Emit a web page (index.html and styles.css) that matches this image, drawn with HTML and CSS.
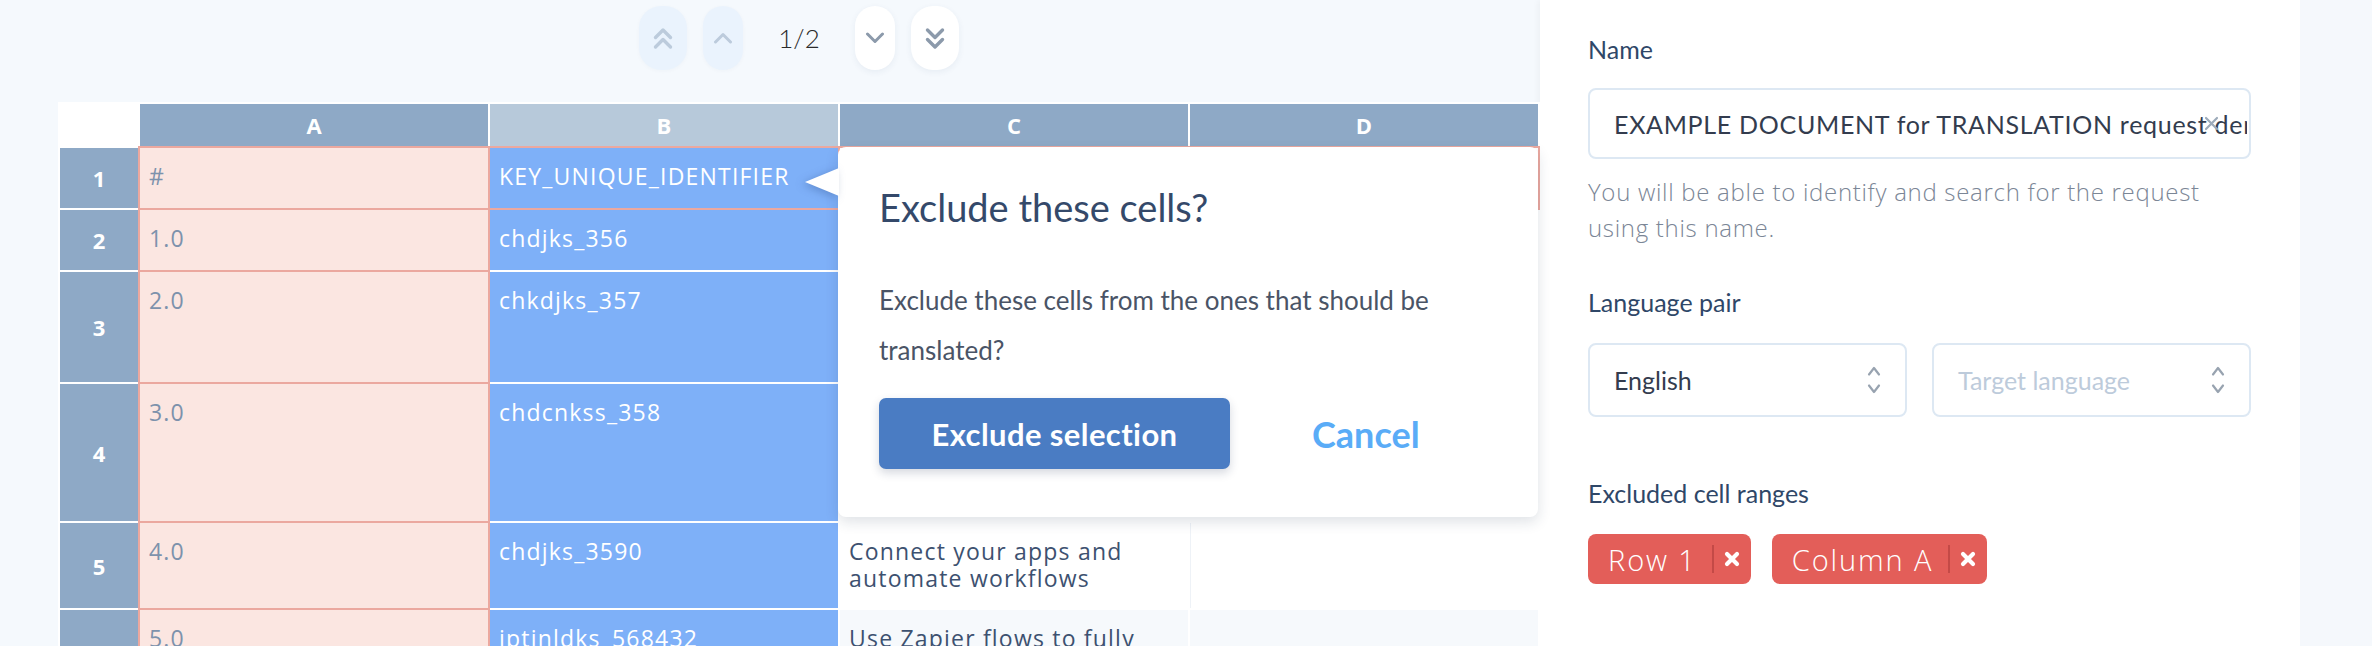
FILE: index.html
```html
<!DOCTYPE html>
<html lang="en">
<head>
<meta charset="utf-8">
<title>Translation request</title>
<link rel="stylesheet" href="styles.css">
</head>
<body>
<div class="app">
  <main class="workspace">
    <nav class="pager">
      <button class="pg pg-wide pg-off" aria-label="First">
        <svg width="20" height="23" viewBox="0 0 20 23"><path d="M2.5 10.5 L10 3 L17.5 10.5 M2.5 20 L10 12.5 L17.5 20" fill="none" stroke="currentColor" stroke-width="3.4" stroke-linecap="round" stroke-linejoin="round"/></svg>
      </button>
      <button class="pg pg-off" aria-label="Previous">
        <svg width="20" height="12" viewBox="0 0 20 12"><path d="M2.5 10 L10 2.5 L17.5 10" fill="none" stroke="currentColor" stroke-width="3" stroke-linecap="round" stroke-linejoin="round"/></svg>
      </button>
      <span class="pg-count">1/2</span>
      <button class="pg" aria-label="Next">
        <svg width="20" height="12" viewBox="0 0 20 12"><path d="M2.5 2 L10 9.5 L17.5 2" fill="none" stroke="currentColor" stroke-width="3" stroke-linecap="round" stroke-linejoin="round"/></svg>
      </button>
      <button class="pg pg-wide" aria-label="Last">
        <svg width="20" height="23" viewBox="0 0 20 23"><path d="M2.5 3 L10 10.5 L17.5 3 M2.5 12.5 L10 20 L17.5 12.5" fill="none" stroke="currentColor" stroke-width="3.4" stroke-linecap="round" stroke-linejoin="round"/></svg>
      </button>
    </nav>

    <section class="sheet-wrap">
      <div class="sheet">
        <div class="corner"></div>
        <div class="col-h">A</div>
        <div class="col-h col-h-sel">B</div>
        <div class="col-h">C</div>
        <div class="col-h">D</div>

        <div class="row-h">1</div>
        <div class="cell cell-a">#</div>
        <div class="cell cell-b cell-ex">KEY_UNIQUE_IDENTIFIER</div>
        <div class="cell cell-ex"></div>
        <div class="cell cell-ex"></div>

        <div class="row-h">2</div>
        <div class="cell cell-a">1.0</div>
        <div class="cell cell-b">chdjks_356</div>
        <div class="cell"></div>
        <div class="cell"></div>

        <div class="row-h">3</div>
        <div class="cell cell-a">2.0</div>
        <div class="cell cell-b">chkdjks_357</div>
        <div class="cell"></div>
        <div class="cell"></div>

        <div class="row-h">4</div>
        <div class="cell cell-a">3.0</div>
        <div class="cell cell-b">chdcnkss_358</div>
        <div class="cell"></div>
        <div class="cell"></div>

        <div class="row-h">5</div>
        <div class="cell cell-a">4.0</div>
        <div class="cell cell-b">chdjks_3590</div>
        <div class="cell">Connect your apps and automate workflows</div>
        <div class="cell cell-d"></div>

        <div class="row-h">6</div>
        <div class="cell cell-a">5.0</div>
        <div class="cell cell-b">iptinldks_568432</div>
        <div class="cell cell-alt">Use Zapier flows to fully automate your workflow</div>
        <div class="cell cell-alt"></div>
      </div>

      <div class="pop-arrow"></div>
      <div class="popover" role="dialog">
        <h2 class="pop-title">Exclude these cells?</h2>
        <p class="pop-text">Exclude these cells from the ones that should be translated?</p>
        <div class="pop-actions">
          <button class="btn-primary">Exclude selection</button>
          <button class="btn-link">Cancel</button>
        </div>
      </div>
    </section>
  </main>

  <aside class="panel">
    <p class="field-label">Name</p>
    <div class="text-input">
      <span class="text-value">EXAMPLE DOCUMENT for TRANSLATION request demo file</span>
      <svg class="clear" width="15" height="15" viewBox="0 0 15 15"><path d="M2 2 L13 13 M13 2 L2 13" stroke="currentColor" stroke-width="2.2" stroke-linecap="round"/></svg>
    </div>
    <p class="hint">You will be able to identify and search for the request using this name.</p>

    <p class="field-label label-gap">Language pair</p>
    <div class="select-row">
      <div class="select">
        <span>English</span>
        <svg width="14" height="32" viewBox="0 0 14 32"><path d="M2 10.5 L7 4 L12 10.5 M2 21.5 L7 28 L12 21.5" fill="none" stroke="currentColor" stroke-width="2.2" stroke-linecap="round" stroke-linejoin="round"/></svg>
      </div>
      <div class="select">
        <span class="placeholder">Target language</span>
        <svg width="14" height="32" viewBox="0 0 14 32"><path d="M2 10.5 L7 4 L12 10.5 M2 21.5 L7 28 L12 21.5" fill="none" stroke="currentColor" stroke-width="2.2" stroke-linecap="round" stroke-linejoin="round"/></svg>
      </div>
    </div>

    <p class="field-label label-gap-lg">Excluded cell ranges</p>
    <div class="chips">
      <span class="chip">Row 1<span class="chip-sep"></span><svg width="18" height="18" viewBox="0 0 18 18"><path d="M4 4 L14 14 M14 4 L4 14" stroke="#fff" stroke-width="4.2" stroke-linecap="round"/></svg></span>
      <span class="chip">Column A<span class="chip-sep"></span><svg width="18" height="18" viewBox="0 0 18 18"><path d="M4 4 L14 14 M14 4 L4 14" stroke="#fff" stroke-width="4.2" stroke-linecap="round"/></svg></span>
    </div>
  </aside>
  <div class="edge"></div>
</div>
</body>
</html>
```

FILE: styles.css
```css
html, body {
  margin: 0;
  height: 646px;
  overflow: hidden;
}
body {
  background: #f5f9fd;
  font-family: Lato, "Liberation Sans", sans-serif;
}
.app {
  display: flex;
  height: 646px;
}
.workspace {
  width: 1540px;
  flex: none;
  padding-left: 58px;
  box-sizing: border-box;
}

/* pager */
.pager {
  height: 102px;
  box-sizing: border-box;
  padding-top: 6px;
  display: flex;
  justify-content: center;
  align-items: flex-start;
  gap: 16px;
}
.pg {
  width: 40px;
  height: 64px;
  padding: 0;
  border: 0;
  border-radius: 22px;
  background: #fff;
  color: #8c9aab;
  box-shadow: 0 2px 6px rgba(40, 70, 110, 0.07);
  display: flex;
  align-items: center;
  justify-content: center;
}
.pg-wide { width: 48px; }
.pg-off {
  background: #eaf3fd;
  color: #bccbdc;
  box-shadow: 0 1px 4px rgba(40, 70, 110, 0.03);
}
.pg-count {
  width: 80px;
  text-align: center;
  line-height: 64px;
  font-size: 26px;
  font-weight: 300;
  color: #2a2a2a;
}

/* sheet */
.sheet-wrap { position: relative; }
.sheet {
  display: grid;
  grid-template-columns: 78px repeat(4, 348px);
  grid-template-rows: 42px 60px 60px 110px 137px 85px 150px;
  gap: 2px;
  padding: 2px;
  background: #fff;
  width: max-content;
}
.corner { background: #fff; }
.col-h, .row-h {
  background: #8ea9c6;
  color: #fff;
  font-family: "Open Sans", sans-serif;
  font-weight: 700;
  font-size: 22px;
  display: flex;
  align-items: center;
  justify-content: center;
}
.col-h-sel { background: #b7c9da; }
.cell {
  background: #fff;
  color: #3d5170;
  font-family: "Open Sans", sans-serif;
  font-size: 23px;
  letter-spacing: 1.2px;
  line-height: 27px;
  padding: 15px 9px 0;
  box-sizing: border-box;
  overflow: hidden;
}
.cell-a {
  background: #fbe6e1;
  color: #7d92ac;
  box-shadow: 0 0 0 2px #eba89f;
}
.cell-b {
  background: #7eb0f8;
  color: #fff;
  white-space: nowrap;
}
.cell-ex { box-shadow: 0 0 0 2px #eba89f; }
.cell-d { border-left: 1px solid #eef2f7; }
.cell-alt { background: #f6f9fc; }

/* popover */
.popover {
  position: absolute;
  left: 780px;
  top: 45px;
  width: 700px;
  height: 370px;
  box-sizing: border-box;
  padding: 38px 41px;
  background: #fff;
  border-radius: 8px;
  box-shadow: 0 5px 14px rgba(30, 50, 80, 0.14);
  z-index: 2;
}
.pop-arrow {
  position: absolute;
  left: 747px;
  top: 66px;
  width: 0;
  height: 0;
  border-style: solid;
  border-width: 14px 34px 14px 0;
  border-color: transparent #fff transparent transparent;
  filter: drop-shadow(-3px 2px 4px rgba(30, 60, 120, 0.3));
  z-index: 3;
}
.pop-title {
  margin: 0;
  font-size: 38px;
  line-height: 44px;
  font-weight: 400;
  color: #34496a;
}
.pop-text {
  margin: 46px 0 0;
  font-size: 26px;
  line-height: 50px;
  color: #4a5466;
}
.pop-actions {
  display: flex;
  align-items: center;
  margin-top: 23px;
}
.btn-primary {
  width: 351px;
  height: 71px;
  border: 0;
  border-radius: 7px;
  background: #4a7cc3;
  color: #fff;
  font-family: Lato, sans-serif;
  font-weight: 700;
  font-size: 31px;
  letter-spacing: 0.4px;
  box-shadow: 0 4px 10px rgba(20, 40, 80, 0.18);
}
.btn-link {
  margin-left: 82px;
  padding: 0;
  border: 0;
  background: none;
  color: #5aacf7;
  font-family: Lato, sans-serif;
  font-weight: 700;
  font-size: 36px;
}

/* side panel */
.panel {
  width: 760px;
  flex: none;
  box-sizing: border-box;
  padding: 33px 49px 0 48px;
  background: #fff;
  box-shadow: -2px 0 6px rgba(0, 0, 0, 0.04);
}
.field-label {
  margin: 0;
  font-size: 25px;
  line-height: 32px;
  color: #2f4768;
}
.label-gap { margin-top: 40px; }
.label-gap-lg { margin-top: 60px; }
.text-input {
  position: relative;
  margin-top: 23px;
  height: 71px;
  box-sizing: border-box;
  border: 2px solid #dde8f3;
  border-radius: 8px;
  padding: 0 2px 0 24px;
  display: flex;
  align-items: center;
  overflow: hidden;
}
.text-value {
  white-space: nowrap;
  overflow: hidden;
  font-size: 25px;
  letter-spacing: 0.7px;
  color: #333c4e;
}
.clear {
  position: absolute;
  right: 30px;
  top: 26px;
  color: #9dabba;
}
.hint {
  margin: 15px 0 0;
  font-family: "Open Sans", sans-serif;
  font-weight: 300;
  font-size: 24px;
  letter-spacing: 0.7px;
  line-height: 36px;
  color: #7b8696;
}
.select-row {
  margin-top: 25px;
  display: grid;
  grid-template-columns: 1fr 1fr;
  gap: 25px;
}
.select {
  height: 74px;
  box-sizing: border-box;
  border: 2px solid #dde8f3;
  border-radius: 8px;
  padding: 0 24px 0 24px;
  display: flex;
  align-items: center;
  justify-content: space-between;
  font-size: 25px;
  color: #333c4e;
}
.select svg { color: #98a3b0; }
.placeholder { color: #bdcbdb; }
.chips {
  margin-top: 25px;
  display: flex;
  gap: 21px;
}
.chip {
  height: 50px;
  box-sizing: border-box;
  padding: 0 10px 0 20px;
  border-radius: 8px;
  background: #e35e59;
  color: #fff;
  display: flex;
  align-items: center;
  font-family: "Open Sans", sans-serif;
  font-weight: 300;
  font-size: 29px;
  letter-spacing: 1.9px;
}
.chip-sep {
  width: 2px;
  height: 28px;
  background: #c44a47;
  margin: 0 9px 0 15px;
}
.edge {
  flex: 1;
  background: #f5f8fc;
}
```
